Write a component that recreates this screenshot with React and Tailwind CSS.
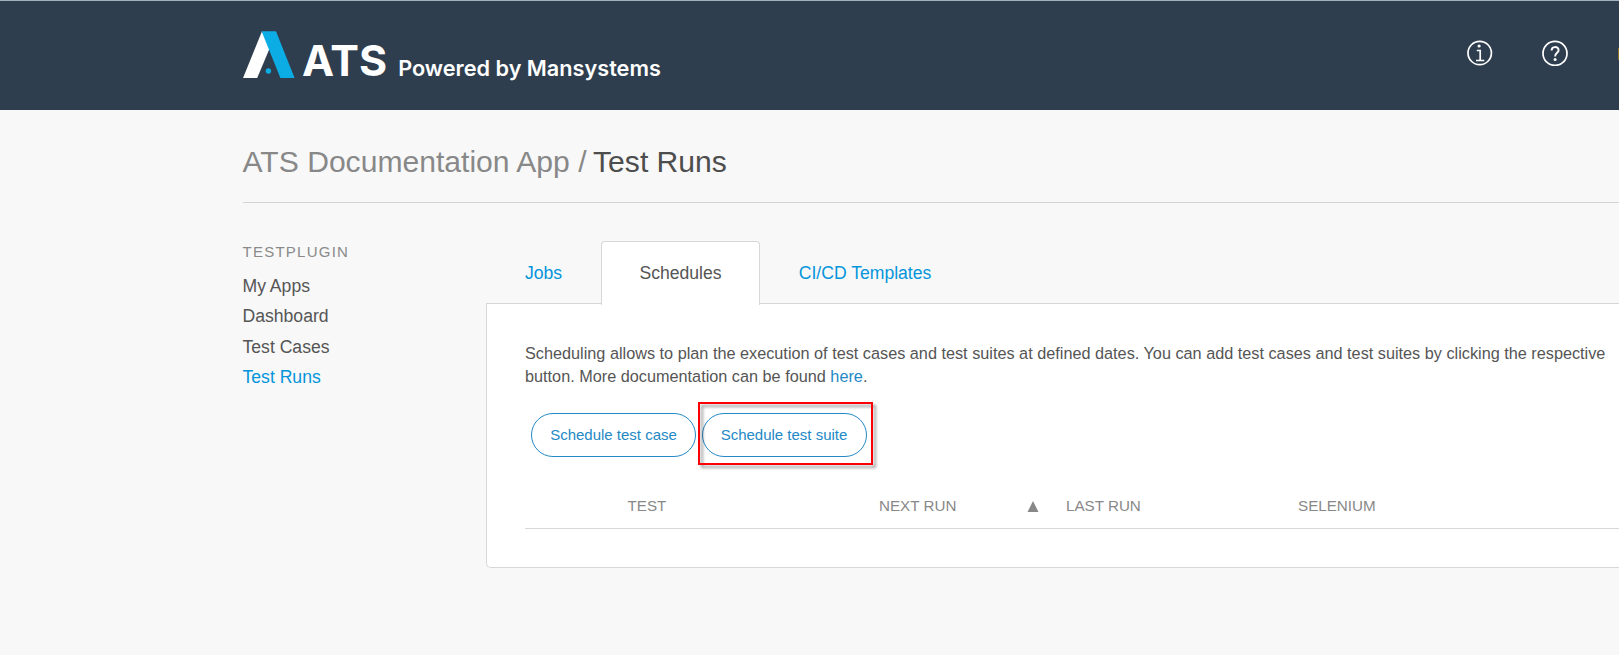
function LogoMark() {
  return (
    <svg width="52" height="48" viewBox="0 0 52 48" className="block shrink-0">
      <path d="M19 0.2 L27 16.5 L14.2 47 H0 Z" fill="#ffffff" />
      <path d="M18.6 0.2 H33 L51.6 47 H37.4 Z" fill="#0cade4" />
      <circle cx="25.4" cy="40" r="2.7" fill="#0cade4" />
    </svg>
  );
}

function InfoIcon() {
  return (
    <svg width="26" height="26" viewBox="0 0 26 26" fill="none" stroke="#ffffff">
      <circle cx="12.7" cy="13" r="11.7" strokeWidth="1.7" />
      <path d="M9.8 10.5 H13.2 V20 M9 20.5 H17.3" strokeWidth="1.7" />
      <circle cx="12.1" cy="6" r="1.6" fill="#ffffff" stroke="none" />
    </svg>
  );
}

function HelpIcon() {
  return (
    <svg width="26" height="26" viewBox="0 0 26 26" fill="none" stroke="#ffffff">
      <circle cx="13" cy="13.4" r="12" strokeWidth="1.7" />
      <path d="M9.6 10.4 C9.6 6 16.6 6 16.6 10.2 C16.6 12.8 13.1 12.9 13.1 16.4" strokeWidth="1.9" />
      <circle cx="13.1" cy="19.4" r="1.5" fill="#ffffff" stroke="none" />
    </svg>
  );
}

function Header() {
  return (
    <header className="flex h-[110px] border-t border-[#a5b1bc] bg-[#2e3e4e] pl-[243px] text-white">
      <div className="flex pt-[30px] font-['Inter',sans-serif]">
        <LogoMark />
        <div className="flex h-[48px] items-baseline pt-px pl-[7px]">
          <span className="text-[43px] leading-[57px] font-bold">ATS</span>
          <span className="ml-[11px] text-[21.7px] font-semibold whitespace-nowrap">Powered by Mansystems</span>
        </div>
      </div>
      <div className="ml-auto flex pt-[39px]">
        <InfoIcon />
        <span className="ml-[49px]">
          <HelpIcon />
        </span>
        <span className="mt-[8px] ml-[50px] h-[12px] w-px bg-[#8a7424]" />
      </div>
    </header>
  );
}

const menu = ["My Apps", "Dashboard", "Test Cases", "Test Runs"];

function Sidebar() {
  return (
    <nav className="w-[243px] shrink-0 pt-[39px]">
      <h2 className="-ml-px mb-[9px] pl-[0.5px] text-[15px] leading-[20px] tracking-[1.25px] text-[#8a8a8a]">TESTPLUGIN</h2>
      <ul className="-ml-px pl-[0.5px] text-[17.6px] leading-[30.4px] text-[#555555]">
        {menu.map((name) => (
          <li key={name} className={name === "Test Runs" ? "text-[#0595db]" : ""}>
            {name}
          </li>
        ))}
      </ul>
    </nav>
  );
}

function Tabs() {
  return (
    <div className="relative z-10 -mb-[2px] flex h-[64px] text-[17.6px] leading-[64px] text-[#0595db]">
      <span className="w-[115px] pl-[39px]">Jobs</span>
      <span className="w-[159px] rounded-t-[4px] border-x border-t border-[#d7d7d7] bg-white text-center leading-[62px] text-[#555555]">
        Schedules
      </span>
      <span className="pl-[38.7px]">CI/CD Templates</span>
    </div>
  );
}

function PillButton({ children }) {
  return (
    <button className="h-[44px] w-[165px] rounded-full border border-[#2489c5] text-[15px] leading-[42px] whitespace-nowrap text-[#2489c5]">
      {children}
    </button>
  );
}

function Panel() {
  return (
    <section className="h-[265px] rounded-bl-[5px] border-y border-l border-[#d7d7d7] bg-white pt-[38px] pl-[38px]">
      <p className="text-[16.26px] leading-[23px] whitespace-nowrap text-[#555555]">
        Scheduling allows to plan the execution of test cases and test suites at defined dates. You can add test cases
        and test suites by clicking the respective
        <br />
        button. More documentation can be found <a className="text-[#2489c5]">here</a>.
      </p>
      <div className="mt-[25px] flex gap-[5.5px] pl-[6px]">
        <PillButton>Schedule test case</PillButton>
        <span className="relative">
          <PillButton>Schedule test suite</PillButton>
          <span className="absolute -top-[11px] -left-[3.5px] h-[63px] w-[175px] border-2 border-[#fb0007] drop-shadow-[3px_3px_1.5px_rgba(0,0,0,0.4)]" />
        </span>
      </div>
      <div className="mt-[33px] grid h-[39px] grid-cols-[102.5px_251.5px_187px_232px_1fr] border-b border-[#d7d7d7] text-[15.2px] leading-[31px] text-[#888888]">
        <span />
        <span>TEST</span>
        <span className="flex">
          NEXT RUN
          <svg width="12" height="11" viewBox="0 0 12 11" className="mt-[11px] mr-[27px] ml-auto block">
            <path d="M6 0 L11.5 11 H0.5 Z" fill="#888888" />
          </svg>
        </span>
        <span>LAST RUN</span>
        <span>SELENIUM</span>
      </div>
    </section>
  );
}

export default function App() {
  return (
    <div className="h-[655px] overflow-hidden bg-[#f8f8f8] font-['Liberation_Sans',Arial,sans-serif]">
      <Header />
      <main className="pl-[243px]">
        <h1 className="flex border-b border-[#d5d5d5] pt-[34px] pb-[22px] text-[30.1px] leading-[36px] text-[#888888]">
          <span className="-ml-[0.5px]">ATS Documentation App /</span>
          <span className="ml-[6.5px] text-[#4d4d4d]">Test Runs</span>
        </h1>
        <div className="flex">
          <Sidebar />
          <div className="min-w-0 flex-1 pt-[38px]">
            <Tabs />
            <Panel />
          </div>
        </div>
      </main>
    </div>
  );
}
